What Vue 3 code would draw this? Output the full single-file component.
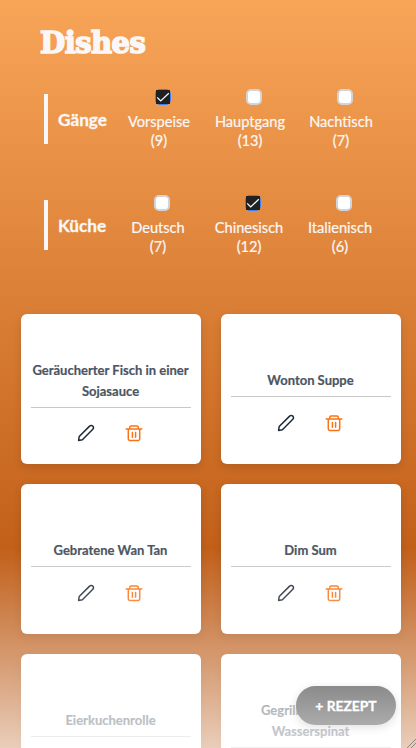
<script setup>
const groups = [
  {
    title: 'Gänge',
    cls: 'courses',
    items: [
      { name: 'Vorspeise', count: 9, checked: true },
      { name: 'Hauptgang', count: 13, checked: false },
      { name: 'Nachtisch', count: 7, checked: false },
    ],
  },
  {
    title: 'Küche',
    cls: 'cuisine',
    items: [
      { name: 'Deutsch', count: 7, checked: false },
      { name: 'Chinesisch', count: 12, checked: true },
      { name: 'Italienisch', count: 6, checked: false },
    ],
  },
]
const dishes = [
  { lines: ['Geräucherter Fisch in einer', 'Sojasauce'] },
  { lines: ['Wonton Suppe'] },
  { lines: ['Gebratene Wan Tan'] },
  { lines: ['Dim Sum'] },
  { lines: ['Eierkuchenrolle'] },
  { lines: ['Gegrillter', 'Wasserspinat'], shifted: true },
]
</script>

<template>
  <main class="page">
    <h1>Dishes</h1>
    <section v-for="g in groups" :key="g.title" class="group" :class="g.cls">
      <h2>{{ g.title }}</h2>
      <div class="options">
        <label v-for="o in g.items" :key="o.name" class="option">
          <span class="box" :class="{ checked: o.checked }">
            <svg v-if="o.checked" viewBox="0 0 14 14" width="14" height="14">
              <rect width="14" height="14" fill="#212121" />
              <path d="M1.2 7.4 4.7 11 12.8 3.2" fill="none" stroke="#fff" stroke-width="1.2" />
            </svg>
          </span>
          <span>{{ o.name }}</span>
          <span>({{ o.count }})</span>
        </label>
      </div>
    </section>

    <div class="cards">
      <article v-for="(d, i) in dishes" :key="i" class="card" :class="{ shifted: d.shifted }">
        <h3><span v-for="l in d.lines" :key="l">{{ l }}</span></h3>
        <div class="actions">
          <svg class="pencil" viewBox="0 0 18 18" width="18" height="18">
            <path d="M1.6 16.4 2.2 12.5 12.6 2.1a2.2 2.2 0 0 1 3.2 0 2.2 2.2 0 0 1 0 3.2L5.4 15.7Z" />
          </svg>
          <svg class="trash" viewBox="0 0 18 18" width="18" height="18">
            <path d="M1.2 5.1H16.8M3.3 5.1V15q0 1.4 1.4 1.4h8.6q1.4 0 1.4-1.4V5.1M4.7 5V3.4q0-1.5 1.5-1.5h5.6q1.5 0 1.5 1.5V5M7.4 8.4v4.8M10.6 8.4v4.8" />
          </svg>
        </div>
      </article>
    </div>

    <button class="add">+ REZEPT</button>
    <div class="fade"></div>
    <svg class="grip" viewBox="0 0 9 9" width="9" height="9">
      <path d="M0 9 9 0M4 9 9 4" />
    </svg>
  </main>
</template>

<style>
body { margin: 0; overflow: hidden; }
</style>

<style scoped>
* { box-sizing: border-box; }
.page {
  position: relative;
  height: 748px;
  overflow: hidden;
  background: linear-gradient(#f8a558 0, #c2601a 550px, #b4500a 748px);
  font-family: Lato, "Liberation Sans", sans-serif;
  color: #faf7f8;
}
h1 {
  margin: 0;
  padding: 23px 0 0 40px;
  height: 89px;
  font: bold 29px/40px "DejaVu Serif", serif;
  letter-spacing: -0.5px;
  -webkit-text-stroke: 1.6px #faf7f8;
}
.group {
  display: flex;
  height: 106px;
  padding-left: 44px;
}
h2 {
  flex: none;
  width: 69px;
  height: 50px;
  margin: 5px 0 0;
  padding-left: 10px;
  border-left: 4px solid #faf7f8;
  font-size: 17.2px;
  line-height: 52px;
  -webkit-text-stroke: 0.3px #faf7f8;
}
.options { display: grid; grid-template-columns: repeat(3, 91px); }
.cuisine .options { margin-left: -1px; }
.option {
  display: flex;
  flex-direction: column;
  align-items: center;
  padding-left: 1px;
  font-size: 14.6px;
  line-height: 19px;
  -webkit-text-stroke: 0.2px #faf7f8;
}
.box {
  display: flex;
  flex: none;
  width: 16px;
  height: 16px;
  margin: 0 0 6.5px 7px;
  border: 2px solid #d1d5db;
  border-radius: 5px;
  background: #fff;
}
.box.checked { border: 1px solid #3b82f6; background: #3b82f6; }
.cards {
  display: grid;
  grid-template-columns: 180px 180px;
  grid-auto-rows: 150px;
  gap: 20px;
  padding: 13px 0 0 21px;
}
.card {
  display: flex;
  flex-direction: column;
  justify-content: center;
  padding: 24px 10px 0;
  border-radius: 6px;
  background: #fff;
  box-shadow: 0 3px 8px rgba(0, 0, 0, .12);
}
h3 {
  display: flex;
  flex-direction: column;
  margin: 0;
  padding: 0 1px 5px 0;
  border-bottom: 1px solid #c8c8c8;
  color: #4b5563;
  font-size: 13px;
  line-height: 21px;
  text-align: center;
  white-space: nowrap;
  -webkit-text-stroke: 0.2px #4b5563;
}
.shifted h3 span:first-child { padding-left: 30px; text-align: left; }
.actions { display: flex; justify-content: center; gap: 30px; padding: 16.7px 2px 0.3px 0; }
.actions svg { fill: none; stroke-width: 1.5; stroke-linejoin: round; stroke-linecap: round; }
.pencil { stroke: #1f2937; }
.trash { stroke: #f97316; }
.add {
  position: absolute;
  left: 296px;
  top: 686px;
  width: 100px;
  height: 39px;
  padding: 0;
  border: 0;
  border-radius: 20px;
  background: #181818;
  color: #fff;
  font: bold 13.8px/39px Lato, sans-serif;
  -webkit-text-stroke: 0.3px #fff;
  box-shadow: 0 3px 8px rgba(0, 0, 0, .3);
}
.fade {
  position: absolute;
  inset: 548px 0 0;
  background: linear-gradient(rgba(255, 255, 255, 0), rgba(255, 255, 255, .72));
  pointer-events: none;
}
.grip { position: absolute; right: 0; bottom: 0; fill: none; stroke: #8d8580; stroke-width: 1; }
</style>
